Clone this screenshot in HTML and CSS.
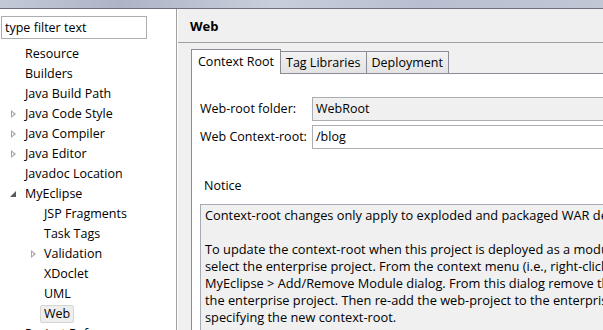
FILE: index.html
```html
<!DOCTYPE html>
<html>
<head>
    <title>Properties - Web</title>
    <link rel="stylesheet" href="styles.css">
</head>
<body>
    <div class="titlebar"></div>
    <div class="main">
        <div class="nav">
            <div class="filter">type filter text</div>
            <ul class="tree">
                <li class="lvl1">Resource</li>
                <li class="lvl1">Builders</li>
                <li class="lvl1">Java Build Path</li>
                <li class="lvl1 closed">Java Code Style</li>
                <li class="lvl1 closed">Java Compiler</li>
                <li class="lvl1 closed">Java Editor</li>
                <li class="lvl1">Javadoc Location</li>
                <li class="lvl1 open">MyEclipse</li>
                <li class="lvl2">JSP Fragments</li>
                <li class="lvl2">Task Tags</li>
                <li class="lvl2 closed">Validation</li>
                <li class="lvl2">XDoclet</li>
                <li class="lvl2">UML</li>
                <li class="lvl2"><span class="selected">Web</span></li>
                <li class="lvl1">Project References</li>
            </ul>
        </div>
        <div class="page">
            <div class="page-title">Web</div>
            <div class="tabs">
                <div class="tab active">Context Root</div>
                <div class="tab">Tag Libraries</div>
                <div class="tab">Deployment</div>
                <div class="tab-fill"></div>
            </div>
            <div class="tab-body">
                <div class="field">
                    <label>Web-root folder:</label>
                    <div class="input disabled">WebRoot</div>
                </div>
                <div class="field">
                    <label>Web Context-root:</label>
                    <div class="input">/blog</div>
                </div>
                <div class="notice-label">Notice</div>
                <div class="notice">
                    <p>Context-root changes only apply to exploded and packaged WAR deployments.</p>
                    <p>To update the context-root when this project is deployed as a module of an enterprise project,<br>select the enterprise project. From the context menu (i.e., right-click) open the<br>MyEclipse &gt; Add/Remove Module dialog. From this dialog remove the web-project from<br>the enterprise project. Then re-add the web-project to the enterprise project,<br>specifying the new context-root.</p>
                </div>
            </div>
        </div>
    </div>
</body>
</html>
```

FILE: styles.css
```css
body { margin: 0; width: 603px; height: 330px; overflow: hidden; font-family: "Open Sans", "Noto Sans", sans-serif; font-size: 12px; color: #000; background: #f0f0f0; }
.titlebar { height: 8px; background: linear-gradient(to right, #c4c9d8, #aeb4c6 20%, #c9cedc 45%, #b9bfd0 70%, #c2c7d6); border-bottom: 1px solid #6d717c; }
.main { display: flex; height: 321px; overflow: hidden; }

.nav { width: 176px; background: #fff; border-right: 1px solid #a0a0a0; flex-shrink: 0; overflow: hidden; }
.filter { margin: 7px 0 0 1px; width: 141px; height: 21px; border: 1px solid #adadad; line-height: 21px; padding-left: 3px; font-size: 12.5px; }
.tree { list-style: none; margin: 5px 0 0; padding: 0; }
.tree li { height: 20px; line-height: 20px; position: relative; white-space: nowrap; font-size: 12.5px; }
.tree .lvl1 { padding-left: 25px; }
.tree .lvl2 { padding-left: 44px; }
.tree .closed::before { content: ""; position: absolute; top: 6px; width: 0; height: 0; border-left: 5px solid #a6a6a6; border-top: 4px solid transparent; border-bottom: 4px solid transparent; }
.tree .closed::after { content: ""; position: absolute; top: 8px; width: 0; height: 0; border-left: 2px solid #fff; border-top: 2px solid transparent; border-bottom: 2px solid transparent; }
.tree .lvl1.closed::before { left: 11px; }
.tree .lvl1.closed::after { left: 12px; }
.tree .lvl2.closed::before { left: 31px; }
.tree .lvl2.closed::after { left: 32px; }
.tree .open::before { content: ""; position: absolute; left: 10px; top: 7px; width: 0; height: 0; border-right: 6px solid #595959; border-top: 6px solid transparent; }
.selected { display: inline-block; margin-left: -4px; padding: 0 3px; height: 16px; line-height: 16px; background: #eeeeee; border: 1px solid #d5d5d5; border-radius: 2px; }

.page { flex: 1; display: flex; flex-direction: column; border-left: 1px solid #ffffff; min-width: 0; overflow: hidden; }
.page-title { height: 33px; line-height: 34px; padding-left: 12px; font-weight: bold; font-size: 13px; border-bottom: 1px solid #a0a0a0; }
.tabs { display: flex; align-items: flex-end; margin: 7px 0 0 13px; height: 24px; }
.tab { height: 21px; line-height: 21px; padding: 0 5px; border: 1px solid #898c95; border-bottom: none; border-left: none; background: linear-gradient(#f2f2f2, #e3e3e3); font-size: 12.5px; }
.tab.active { height: 24px; line-height: 23px; border-left: 1px solid #898c95; padding: 0 6px; background: #fff; border-bottom: none; }
.tab-fill { flex: 1; border-bottom: 1px solid #898c95; }
.tabs .tab:not(.active) { border-bottom: 1px solid #898c95; }
.tab-body { flex: 1; margin-left: 13px; background: #fff; border-left: 1px solid #898c95; padding: 21px 0 0 8px; }

.field { display: flex; align-items: center; height: 25px; margin-bottom: 3px; }
.field:first-child { margin-top: 1px; }
.field label { width: 112px; flex-shrink: 0; font-size: 12.5px; }
.input { flex: 1; height: 22px; line-height: 22px; border: 1px solid #abadb3; border-right: none; padding-left: 3px; font-size: 12.5px; white-space: nowrap; }
.input.disabled { background: #f0f0f0; }

.notice-label { margin: 29px 0 0 4px; height: 16px; line-height: 16px; font-size: 12.5px; }
.notice { margin: 10px 0 0 0; background: #f0f0f0; border: 1px solid #a5acb5; border-right: none; padding: 2px 0 0 4px; white-space: nowrap; font-size: 12.8px; line-height: 17px; height: 200px; overflow: hidden; }
.notice p { margin: 0 0 17px; }
```
